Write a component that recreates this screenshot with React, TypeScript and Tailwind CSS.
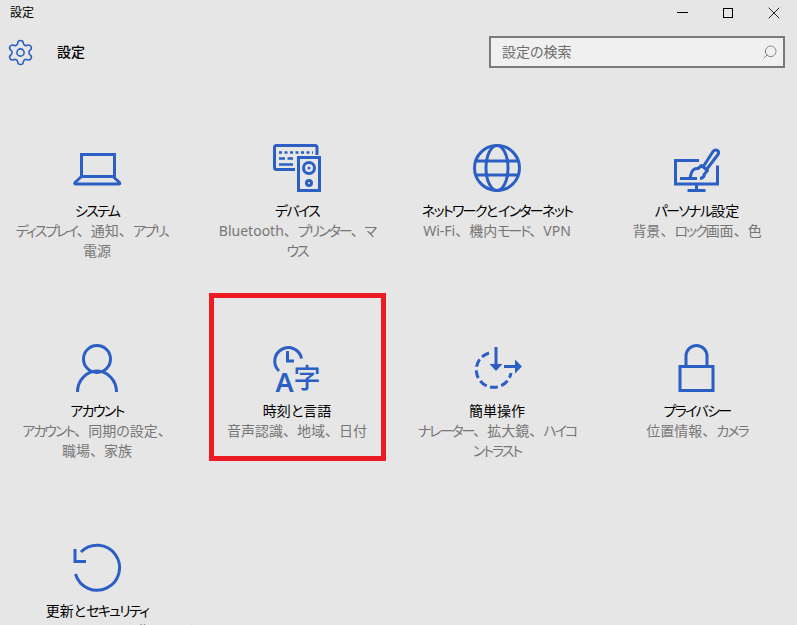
import { Search, Settings, X } from "lucide-react";
import type { ReactNode } from "react";

const stroke = { fill: "none", stroke: "currentColor", strokeWidth: 3 };

function Icon({ children }: { children: ReactNode }) {
  return (
    <svg viewBox="0 0 48 48" className="w-12 h-12 text-[#2b5fc4] overflow-visible">
      {children}
    </svg>
  );
}

const LaptopIcon = () => (
  <Icon>
    <path {...stroke} d="M8.5 33V10.5H41.5V33" />
    <path {...stroke} strokeLinejoin="round" d="M8.5 32.5H40L46.5 38.5Q47.5 40 45.5 40H3Q1 40 2 38.5Z" />
  </Icon>
);

const DeviceIcon = () => (
  <Icon>
    <path {...stroke} d="M22 25.5H3.5Q1.5 25.5 1.5 23.5V3.5Q1.5 1.5 3.5 1.5H42Q44 1.5 44 3.5V11" />
    <path fill="none" stroke="currentColor" strokeWidth="2.5" strokeDasharray="3 2.5" d="M6 8.5H40" />
    <path fill="none" stroke="currentColor" strokeWidth="2.5" d="M6 14.5H12M14.5 14.5H20M6 20.5H20" />
    <rect {...stroke} x="25.5" y="13.5" width="21" height="33" />
    <circle {...stroke} cx="36" cy="24" r="5.5" />
    <circle cx="36" cy="24" r="1.5" fill="currentColor" />
    <circle {...stroke} cx="36" cy="39" r="2.5" />
  </Icon>
);

const GlobeIcon = () => (
  <Icon>
    <circle {...stroke} cx="24" cy="24" r="22.5" />
    <ellipse {...stroke} cx="24" cy="24" rx="11" ry="22.5" />
    <path {...stroke} d="M3.5 17H44.5M3.5 31H44.5" />
  </Icon>
);

const BrushIcon = () => (
  <Icon>
    <path {...stroke} d="M26 16.5H2.5V40H44.5V21.5" />
    <path {...stroke} d="M23.5 40V46M14.5 46.5H32.5" />
    <path {...stroke} d="M7 34.5H24" />
    <path {...stroke} strokeLinejoin="round" d="M30 23L40 7.5Q42 5 44.5 6.5Q46.5 8 45 10.5L33.5 25.5" />
    <path {...stroke} strokeLinejoin="round" d="M17 34.5Q17.5 31 19 27.5Q21 24 25 24.5L28.5 21.5L34.5 26.5L31.5 30Q31 34 27 34.5" />
  </Icon>
);

const PersonIcon = () => (
  <Icon>
    <circle {...stroke} cx="24" cy="15" r="13.5" />
    <path {...stroke} d="M4.5 48A19.5 21 0 0 1 43.5 48" />
  </Icon>
);

const LanguageIcon = () => (
  <Icon>
    <path {...stroke} d="M6 27A13.5 13.5 0 1 1 28.5 14.5" />
    <path {...stroke} d="M14.5 7V17H21" />
    <text x="2.5" y="48" fontSize="27" fontWeight="600" fill="currentColor" fontFamily="'Noto Sans'">A</text>
    <text x="20.5" y="44" fontSize="27" fontWeight="500" fill="currentColor" fontFamily="'Noto Sans CJK JP'">字</text>
  </Icon>
);

const AccessIcon = () => (
  <Icon>
    <path {...stroke} strokeDasharray="8 3.5" d="M16 9A17.5 17.5 0 1 0 38 29" />
    <path {...stroke} d="M23 3V24" />
    <path fill="currentColor" d="M16.5 20H29.5L23 27Z" />
    <path {...stroke} d="M31 22.5H44" />
    <path fill="currentColor" d="M42 15.5L49 22.5L42 29.5Z" />
  </Icon>
);

const LockIcon = () => (
  <Icon>
    <rect {...stroke} x="7" y="22.5" width="33" height="24" />
    <path {...stroke} d="M13 22V12A10.5 10.5 0 0 1 34 12V22" />
  </Icon>
);

const UpdateIcon = () => (
  <Icon>
    <path {...stroke} d="M8 8A22.5 22.5 0 1 1 2.5 30" />
    <path {...stroke} d="M2 5V17.5H13" />
  </Icon>
);

// katakana runs sit tighter than kanji, and the comma keeps its full width
function Label({ text, kana }: { text: string; kana: string }) {
  return (
    <>
      {text.split(/([ァ-ヶー]+|、)/).map((part, i) =>
        part === "、" ? (
          <span key={i} className="[font-feature-settings:normal]">{part}</span>
        ) : /^[ァ-ヶー]+$/.test(part) ? (
          <span key={i} className={kana}>{part}</span>
        ) : (
          part
        ),
      )}
    </>
  );
}

const tiles = [
  { icon: <LaptopIcon />, title: "システム", sub: ["ディスプレイ、通知、アプリ、", "電源"] },
  { icon: <DeviceIcon />, title: "デバイス", sub: ["Bluetooth、プリンター、マ", "ウス"] },
  { icon: <GlobeIcon />, title: "ネットワークとインターネット", sub: ["Wi-Fi、機内モード、VPN"] },
  { icon: <BrushIcon />, title: "パーソナル設定", sub: ["背景、ロック画面、色"] },
  { icon: <PersonIcon />, title: "アカウント", sub: ["アカウント、同期の設定、", "職場、家族"] },
  { icon: <LanguageIcon />, title: "時刻と言語", sub: ["音声認識、地域、日付"] },
  { icon: <AccessIcon />, title: "簡単操作", sub: ["ナレーター、拡大鏡、ハイコ", "ントラスト"] },
  { icon: <LockIcon />, title: "プライバシー", sub: ["位置情報、カメラ"] },
  { icon: <UpdateIcon />, title: "更新とセキュリティ", sub: ["Windows Update、回復、バック", "アップ"] },
];

export default function App() {
  return (
    <div className="relative h-[625px] w-[797px] overflow-hidden bg-[#e6e6e6] text-black font-['Noto_Sans','Noto_Sans_CJK_JP',sans-serif] [font-feature-settings:'palt']">
      <div className="flex h-[25px] items-center justify-between pl-[10px]">
        <span className="text-xs">設定</span>
        <div className="flex items-center">
          <div className="flex w-[46px] justify-center"><div className="h-px w-[11px] bg-black" /></div>
          <div className="flex w-[46px] justify-center"><div className="h-[10px] w-[10px] border border-black" /></div>
          <div className="flex w-[46px] justify-center"><X size={20} strokeWidth={1} /></div>
        </div>
      </div>

      <div className="mt-[11px] flex h-8 items-center pl-[6px] pr-3">
        <Settings size={29} strokeWidth={1.3} className="text-[#2b5fc4]" />
        <span className="ml-[22px] text-sm font-medium">設定</span>
        <div className="ml-auto flex h-8 w-[296px] items-center justify-between border-2 border-[#7a7a7a] bg-[#f0f0f0] pl-[11px] pr-[5px]">
          <span className="text-sm text-[#6d6d6d]">設定の検索</span>
          <Search size={16} strokeWidth={1} className="-scale-x-100 text-[#555555]" />
        </div>
      </div>

      <div className="mt-[76px] grid grid-cols-[repeat(4,160px)] auto-rows-[200px] gap-x-10 pl-[17px]">
        {tiles.map((t) => (
          <div key={t.title} className="flex flex-col items-center text-center text-sm leading-5">
            {t.icon}
            <div className="mt-[9px] whitespace-nowrap"><Label text={t.title} kana="tracking-[-1.7px]" /></div>
            {t.sub.map((line) => (
              <div key={line} className="whitespace-nowrap text-[#767676]"><Label text={line} kana="tracking-[-2px]" /></div>
            ))}
          </div>
        ))}
      </div>

      <div className="absolute left-[209px] top-[293px] h-[168px] w-[177px] border-[5px] border-[#ed1c24]" />
    </div>
  );
}
